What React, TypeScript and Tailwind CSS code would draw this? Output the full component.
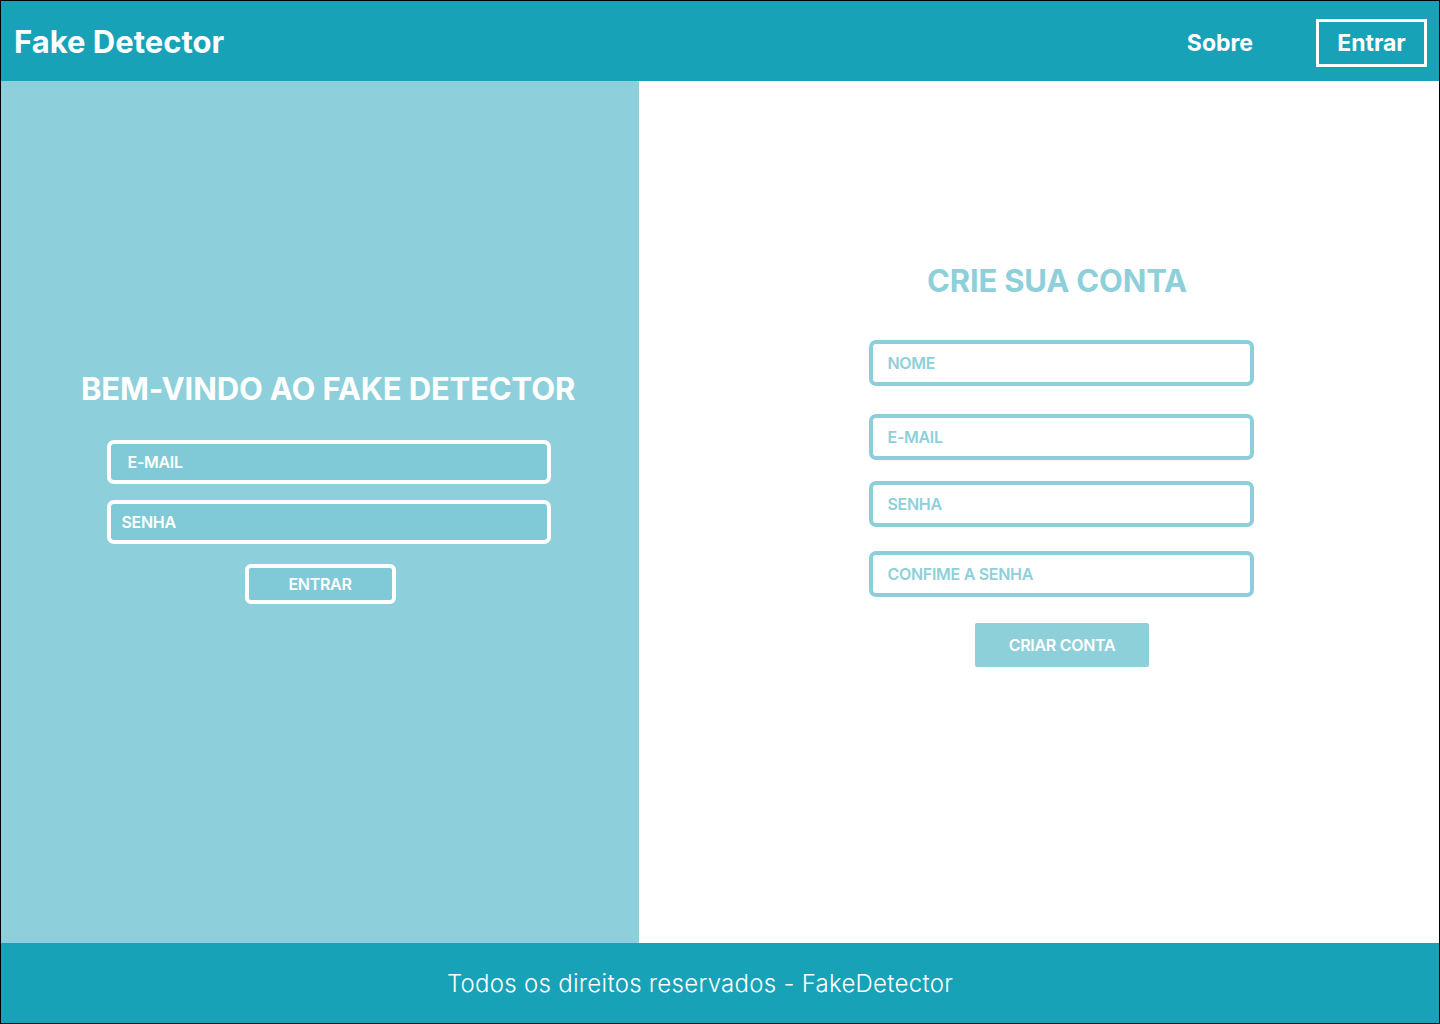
import React from 'react';

const font = { fontFamily: 'Inter, "Noto Sans", sans-serif' };

function LoginInput({ placeholder, pad }: { placeholder: string; pad: string }) {
  return (
    <input
      placeholder={placeholder}
      className={`h-[44px] w-[444px] rounded-[7px] border-4 border-white bg-[#7fcad6] ${pad} text-[16px] font-semibold tracking-[-0.3px] text-white placeholder:text-white outline-none`}
    />
  );
}

function SignupInput({ placeholder }: { placeholder: string }) {
  return (
    <input
      placeholder={placeholder}
      className="h-[46px] w-[385px] rounded-[7px] border-4 border-[#8ccfdb] bg-white px-[15px] text-[16px] font-semibold tracking-[-0.3px] text-[#8ed0da] placeholder:text-[#8ed0da] outline-none"
    />
  );
}

export default function App() {
  return (
    <div className="flex h-[1024px] w-[1440px] flex-col overflow-hidden border border-black" style={font}>
      <header className="flex h-[80px] shrink-0 items-center justify-between bg-[#18a2b8] pl-[13px] pr-[12px]">
        <h1 className="mt-[2px] text-[31px] font-bold text-white">Fake Detector</h1>
        <nav className="mt-[4px] flex items-center gap-[63px]">
          <a className="text-[23px] font-bold text-white">Sobre</a>
          <button className="h-[48px] w-[111px] border-[3px] border-white text-[23px] font-bold text-white">
            Entrar
          </button>
        </nav>
      </header>

      <main className="flex flex-1">
        <section className="flex w-[638px] flex-col items-center bg-[#8dd0db] pt-[289px]">
          <h2 className="ml-[16px] text-[31px] font-bold leading-[38px] tracking-[-0.15px] text-white">
            BEM-VINDO AO FAKE DETECTOR
          </h2>
          <div className="mt-[32px] ml-[17px] flex flex-col gap-[16px]">
            <LoginInput placeholder="E-MAIL" pad="px-[17px]" />
            <LoginInput placeholder="SENHA" pad="px-[11px]" />
          </div>
          <button className="mt-[20px] h-[40px] w-[151px] rounded-[6px] border-4 border-white bg-[#7fcad6] text-[16px] font-semibold tracking-[-0.3px] text-white">
            ENTRAR
          </button>
        </section>

        <section className="flex flex-1 flex-col items-center bg-white pt-[181px]">
          <h2 className="ml-[36px] text-[31px] font-bold leading-[38px] tracking-[-0.2px] text-[#8ed0da]">
            CRIE SUA CONTA
          </h2>
          <div className="mt-[40px] ml-[44px] flex flex-col">
            <SignupInput placeholder="NOME" />
            <div className="mt-[28px]">
              <SignupInput placeholder="E-MAIL" />
            </div>
            <div className="mt-[21px]">
              <SignupInput placeholder="SENHA" />
            </div>
            <div className="mt-[24px]">
              <SignupInput placeholder="CONFIME A SENHA" />
            </div>
          </div>
          <button className="mt-[26px] ml-[46px] h-[44px] w-[174px] rounded-[2px] bg-[#8ed0da] text-[16px] font-semibold tracking-[-0.3px] text-white">
            CRIAR CONTA
          </button>
        </section>
      </main>

      <footer className="flex h-[80px] shrink-0 items-center justify-center bg-[#18a2b8] pr-[40px]">
        <p className="mt-[2px] text-[24px] font-light tracking-[0.28px] text-white">Todos os direitos reservados - FakeDetector</p>
      </footer>
    </div>
  );
}
